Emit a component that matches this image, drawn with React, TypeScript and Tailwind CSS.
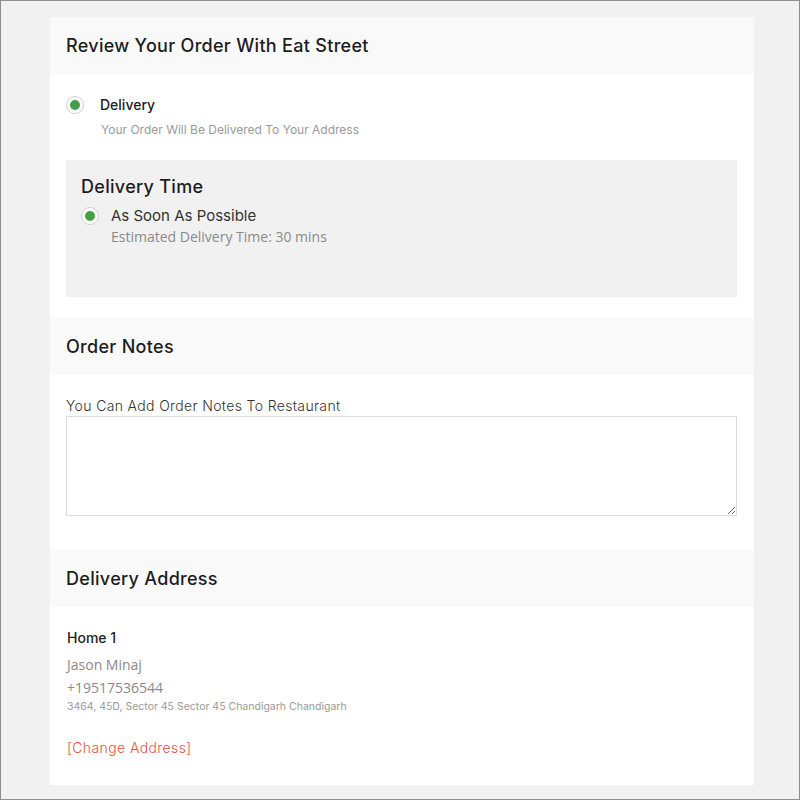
const heading = "font-['Inter',sans-serif]";
const body = "font-['Open_Sans',sans-serif]";

function Radio() {
  return (
    <span className="flex h-[18px] w-[18px] shrink-0 items-center justify-center rounded-full border border-[#cfcfcf] bg-white">
      <span className="h-[10px] w-[10px] rounded-full bg-[#43a047]" />
    </span>
  );
}

function SectionHeader({ title }: { title: string }) {
  return (
    <div className="flex h-[57px] items-center bg-[#f9f9f9] px-4">
      <h2 className={`${heading} text-[18px] font-medium tracking-[0.3px] text-[#1d1d1f]`}>{title}</h2>
    </div>
  );
}

export default function App() {
  return (
    <div className="h-[800px] w-[800px] overflow-hidden border border-[#8e8e8e] bg-[#f1f1f1] pl-[49px] pt-[16px]">
      <div className="w-[704px] bg-white">
        {/* Review order */}
        <SectionHeader title="Review Your Order With Eat Street" />
        <div className="pb-[21px] pl-4 pr-[17px] pt-[20px]">
          <div className="flex items-center gap-4">
            <Radio />
            <span className={`${heading} text-[14px] font-medium text-[#222]`}>Delivery</span>
          </div>
          <p className={`${heading} ml-[35px] mt-[6px] text-[12px] text-[#9a9a9a]`}>
            Your Order Will Be Delivered To Your Address
          </p>

          <div className="mt-[21px] h-[137px] bg-[#f1f1f1] px-[15px] pt-[13px]">
            <h3 className={`${heading} text-[18px] font-medium tracking-[0.3px] text-[#1d1d1f]`}>Delivery Time</h3>
            <div className="mt-[5px] flex items-center gap-3">
              <Radio />
              <span className={`${heading} text-[15px] text-[#333]`}>As Soon As Possible</span>
            </div>
            <p className={`${body} -mt-[2px] ml-[30px] text-[14px] text-[#8a8a8a]`}>
              Estimated Delivery Time: 30 mins
            </p>
          </div>
        </div>

        {/* Order notes */}
        <SectionHeader title="Order Notes" />
        <div className="pb-[34px] pl-4 pr-[17px] pt-[20px]">
          <label className={`${heading} block text-[14px] font-light tracking-[0.35px] text-[#333]`}>
            You Can Add Order Notes To Restaurant
          </label>
          <textarea className="block h-[100px] w-full border border-[#dcdcdc] bg-white" />
        </div>

        {/* Delivery address */}
        <SectionHeader title="Delivery Address" />
        <div className="px-[17px] pb-[27px] pt-[20px]">
          <p className={`${heading} text-[14px] font-medium text-[#222]`}>Home 1</p>
          <p className={`${body} mt-[6px] text-[14px] text-[#8a8a8a]`}>Jason Minaj</p>
          <p className={`${body} mt-[2px] text-[14px] text-[#8a8a8a]`}>+19517536544</p>
          <p className={`${heading} mt-[1px] text-[10.5px] text-[#9a9a9a]`}>
            3464, 45D, Sector 45 Sector 45 Chandigarh Chandigarh
          </p>
          <p className={`${heading} mt-[22px] text-[14px] font-light tracking-[0.4px] text-[#e5533c]`}>
            [Change Address]
          </p>
        </div>
      </div>
    </div>
  );
}
